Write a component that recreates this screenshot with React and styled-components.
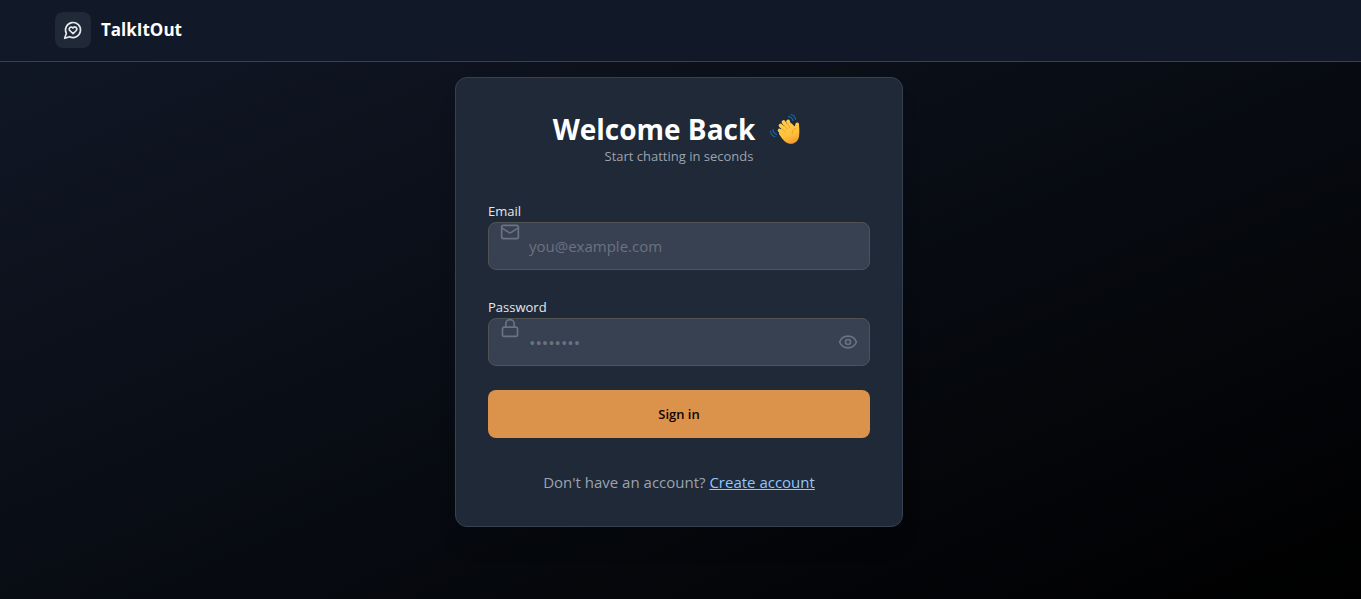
import React, { useState } from "react";
import styled, { createGlobalStyle } from "styled-components";
import { Mail, Lock, Eye, EyeOff } from "lucide-react";

const GlobalStyle = createGlobalStyle`
  *, *::before, *::after { box-sizing: border-box; }
  body { margin: 0; background: #000; }
  body, button, input {
    font-family: "Segoe UI", "Open Sans", "Noto Sans", sans-serif;
  }
`;

const Page = styled.div`
  min-height: 100vh;
  display: flex;
  flex-direction: column;
  background: linear-gradient(to bottom right, #111827, #000);
`;

const Header = styled.header`
  padding-right: 3px;
  background: #111827;
  border-bottom: 1px solid #374151;
`;

const HeaderInner = styled.div`
  max-width: 1280px;
  margin: 0 auto;
  padding: 12px 16px 13px;
`;

const Brand = styled.a`
  display: inline-flex;
  align-items: center;
  gap: 10px;
  color: #fff;
  text-decoration: none;
  vertical-align: top;
`;

const BrandMark = styled.span`
  width: 36px;
  height: 36px;
  border-radius: 8px;
  display: grid;
  place-items: center;
  background: #1f2937;
  color: #e5e7eb;
`;

const BrandName = styled.span`
  font-size: 17px;
  line-height: 28px;
  font-weight: 700;
`;

const Main = styled.main`
  flex: 1;
  padding: 15px 19px 15px 16px;
`;

const Card = styled.section`
  max-width: 448px;
  margin: 0 auto;
  padding: 32px;
  border: 1px solid #374151;
  border-radius: 12px;
  background: #1f2937;
  box-shadow: 0 20px 25px -5px rgba(0, 0, 0, 0.1);
`;

const CardHeader = styled.div`
  text-align: center;
  margin-bottom: 32px;
`;

const Title = styled.h1`
  margin: 0;
  padding-top: 2px;
  display: flex;
  justify-content: center;
  align-items: center;
  gap: 14px;
  color: #fff;
  font-size: 28px;
  line-height: 34px;
  font-weight: 700;
`;

const Subtitle = styled.p`
  margin: 0;
  color: #9ca3af;
  font-size: 13px;
  line-height: 20px;
`;

const Form = styled.form`
  display: flex;
  flex-direction: column;
  gap: 24px;
`;

const Field = styled.div`
  display: flex;
  flex-direction: column;
`;

const Label = styled.label`
  padding-top: 2px;
  color: #e5e7eb;
  font-size: 13px;
  line-height: 22px;
`;

const Control = styled.div`
  position: relative;
`;

const FieldIcon = styled.span`
  position: absolute;
  left: 12px;
  top: 0;
  display: flex;
  color: #6b7280;
  pointer-events: none;
`;

const Input = styled.input`
  display: block;
  width: 100%;
  height: 48px;
  padding: 0 40px;
  border: 1px solid #4f5354;
  border-radius: 8px;
  background: #384152;
  color: #fff;
  font-size: ${(p) => (p.$masked ? 17 : 15)}px;
  &::placeholder { color: #6b7280; opacity: 1; }
`;

const Reveal = styled.button`
  position: absolute;
  right: 12px;
  top: 14px;
  display: flex;
  padding: 0;
  border: 0;
  background: none;
  color: #6b7280;
  cursor: pointer;
`;

const Submit = styled.button`
  height: 48px;
  border: 0;
  border-radius: 8px;
  background: #db924b;
  color: #130201;
  font-size: 13px;
  font-weight: 600;
  cursor: pointer;
`;

const Footer = styled.p`
  margin: 32px 0 0;
  text-align: center;
  color: #9ca3af;
  font-size: 15px;
  line-height: 24px;
`;

const Link = styled.a`
  color: #93c5fd;
  text-decoration: underline;
`;

const ChatHeart = () => (
  <svg width="20" height="20" viewBox="0 0 24 24" fill="none" stroke="currentColor" strokeWidth="2" strokeLinecap="round" strokeLinejoin="round" aria-hidden="true">
    <path d="M7.9 20A9 9 0 1 0 4 16.1L2 22Z" />
    <path d="M15.8 9.2a2.5 2.5 0 0 0-3.5 0l-.3.4-.35-.3a2.42 2.42 0 1 0-3.2 3.6l3.6 3.5 3.6-3.5c1.2-1.2 1.1-2.7.2-3.7" />
  </svg>
);

const WavingHand = () => (
  <svg width="36" height="32" viewBox="9 8 36 32" fill="none" role="img" aria-label="Waving hand">
    <defs>
      <linearGradient id="skin" x1="24" y1="14" x2="34" y2="40" gradientUnits="userSpaceOnUse">
        <stop offset="0" stopColor="#ffcf4a" />
        <stop offset="0.6" stopColor="#ffc23c" />
        <stop offset="1" stopColor="#f0922c" />
      </linearGradient>
    </defs>
    <g stroke="url(#skin)" strokeLinecap="round">
      <path d="M27 30 19.500 25.500" strokeWidth="3.6" />
      <path d="M28 28 20.500 20.500" strokeWidth="3.8" />
      <path d="M29 26 23.500 17" strokeWidth="3.8" />
      <path d="M31 25 28 16.500" strokeWidth="3.8" />
      <path d="M36 27 37.200 19.500" strokeWidth="3.800" />
    </g>
    <path d="M19 27 24 21l7-3 4.500 4 3.500-2c.4 4 .7 9-.2 12.500-1.200 4.500-5.300 6.800-9.300 6.200-4.500-.7-8-5.700-10.500-9.700Z" fill="url(#skin)" />
    <path d="m21.500 23.500 3.500 3M24 20l3.500 4.500M27.500 18l2.500 5M35.500 23.500c-2.200.8-3.500 2.800-3.300 5" stroke="#e59125" strokeWidth=".7" strokeLinecap="round" />
    <g stroke="#176cb0" strokeWidth="1.1" strokeLinecap="round">
      <path d="M28.500 11.500c2.500.3 4 1.700 4.500 4.200M31 9.500c2.500.5 4.200 2.300 4.500 5M13 24.500c.2 2.500 1.500 4.200 3.700 5M10.500 26c.3 3 2 5 4.500 5.700" />
    </g>
  </svg>
);

export default function App() {
  const [visible, setVisible] = useState(false);
  return (
    <>
      <GlobalStyle />
      <Page>
        <Header>
          <HeaderInner>
            <Brand href="#home">
              <BrandMark><ChatHeart /></BrandMark>
              <BrandName>TalkItOut</BrandName>
            </Brand>
          </HeaderInner>
        </Header>
        <Main>
          <Card>
            <CardHeader>
              <Title>Welcome Back <WavingHand /></Title>
              <Subtitle>Start chatting in seconds</Subtitle>
            </CardHeader>
            <Form onSubmit={(e) => e.preventDefault()}>
              <Field>
                <Label htmlFor="email">Email</Label>
                <Control>
                  <Input id="email" type="email" placeholder="you@example.com" />
                  <FieldIcon><Mail size={20} strokeWidth={2} /></FieldIcon>
                </Control>
              </Field>
              <Field>
                <Label htmlFor="password">Password</Label>
                <Control>
                  <Input id="password" $masked type={visible ? "text" : "password"} placeholder="••••••••" />
                  <FieldIcon><Lock size={20} strokeWidth={2} /></FieldIcon>
                  <Reveal type="button" aria-label={visible ? "Hide password" : "Show password"} onClick={() => setVisible(!visible)}>
                    {visible ? <EyeOff size={20} /> : <Eye size={20} />}
                  </Reveal>
                </Control>
              </Field>
              <Submit type="submit">Sign in</Submit>
            </Form>
            <Footer>
              Don't have an account? <Link href="#signup">Create account</Link>
            </Footer>
          </Card>
        </Main>
      </Page>
    </>
  );
}
